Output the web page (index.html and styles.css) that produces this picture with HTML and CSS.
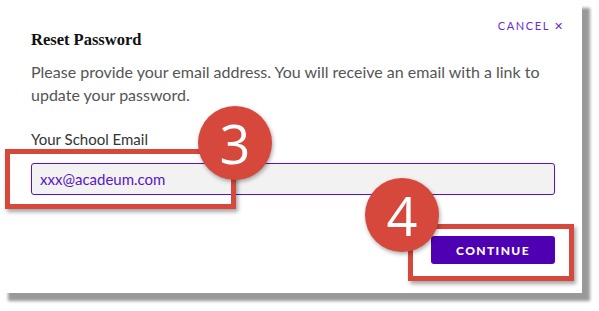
FILE: index.html
```html
<!DOCTYPE html>
<html lang="en">
<head>
    <meta charset="UTF-8">
    <title>Reset Password</title>
    <link rel="stylesheet" href="styles.css">
</head>
<body>
    <div class="dialog">
        <div class="dialog-top">
            <a class="cancel" href="#">CANCEL <span class="cancel-x">&#x2715;</span></a>
        </div>
        <h2 class="title">Reset Password</h2>
        <p class="intro">Please provide your email address. You will receive an email with a link to update your password.</p>

        <label class="field-label" for="email">Your School Email</label>
        <input class="field-input" id="email" type="text" value="xxx@acadeum.com">

        <div class="actions">
            <button class="btn-continue">CONTINUE</button>
        </div>

        <!-- callouts drawn over the dialog -->
        <div class="mark-box mark-box-email"></div>
        <div class="mark-num mark-num-3">3</div>
        <div class="mark-box mark-box-continue"></div>
        <div class="mark-num mark-num-4">4</div>
    </div>
</body>
</html>
```

FILE: styles.css
```css
* {
    margin: 0;
    padding: 0;
    box-sizing: border-box;
}

html,
body {
    background: #fff;
    min-height: 100vh;
}

body {
    font-family: Lato, 'Open Sans', sans-serif;
    padding-bottom: 18px;
}

.dialog {
    position: relative;
    width: 582px;
    height: 293px;
    background: #fff;
    box-shadow: 8px 8px 3px #999;
    padding: 17px 27px 0 31px;
    display: flex;
    flex-direction: column;
}

.dialog-top {
    display: flex;
    justify-content: flex-end;
    margin-right: -8px;
    height: 13px;
}

.cancel {
    color: #6a2bd6;
    font-size: 11px;
    letter-spacing: 1.6px;
    text-decoration: none;
    line-height: 17px;
}

.cancel-x {
    font-size: 11px;
    letter-spacing: 0;
}

.title {
    font-family: 'Liberation Serif', serif;
    font-size: 16.5px;
    font-weight: bold;
    color: #111;
    line-height: 20px;
}

.intro {
    margin-top: 10px;
    font-size: 16px;
    line-height: 23px;
    color: #555;
}

.field-label {
    margin-top: 24px;
    font-size: 15px;
    color: #333;
    line-height: 18px;
}

.field-input {
    margin-top: 15px;
    height: 32px;
    border: 1px solid #5a0fc8;
    border-radius: 3px;
    background: #f2f2f2;
    padding: 0 8px;
    font-family: Lato, 'Open Sans', sans-serif;
    font-size: 15px;
    color: #5a17c8;
    outline: none;
}

.actions {
    display: flex;
    justify-content: flex-end;
    margin-top: 41px;
}

.btn-continue {
    width: 124px;
    height: 28px;
    border: none;
    border-radius: 3px;
    background: #4f00b3;
    color: #fff;
    font-family: Lato, 'Open Sans', sans-serif;
    font-weight: 900;
    font-size: 12px;
    letter-spacing: 1.4px;
}

.mark-box {
    position: absolute;
    border: 5px solid #d6483b;
    box-shadow: 2px 3px 4px rgba(0, 0, 0, 0.35);
}

.mark-box-email {
    left: 5px;
    top: 149px;
    width: 231px;
    height: 60px;
}

.mark-box-continue {
    left: 408px;
    top: 224px;
    width: 166px;
    height: 57px;
}

.mark-num {
    position: absolute;
    width: 74px;
    height: 74px;
    border-radius: 50%;
    background: #d6483b;
    color: #fff;
    font-family: 'Open Sans', sans-serif;
    font-size: 54px;
    line-height: 74px;
    text-align: center;
    box-shadow: 1px 2px 4px rgba(0, 0, 0, 0.35);
}

.mark-num-3 {
    left: 198px;
    top: 106px;
}

.mark-num-4 {
    left: 365px;
    top: 178px;
}
```
